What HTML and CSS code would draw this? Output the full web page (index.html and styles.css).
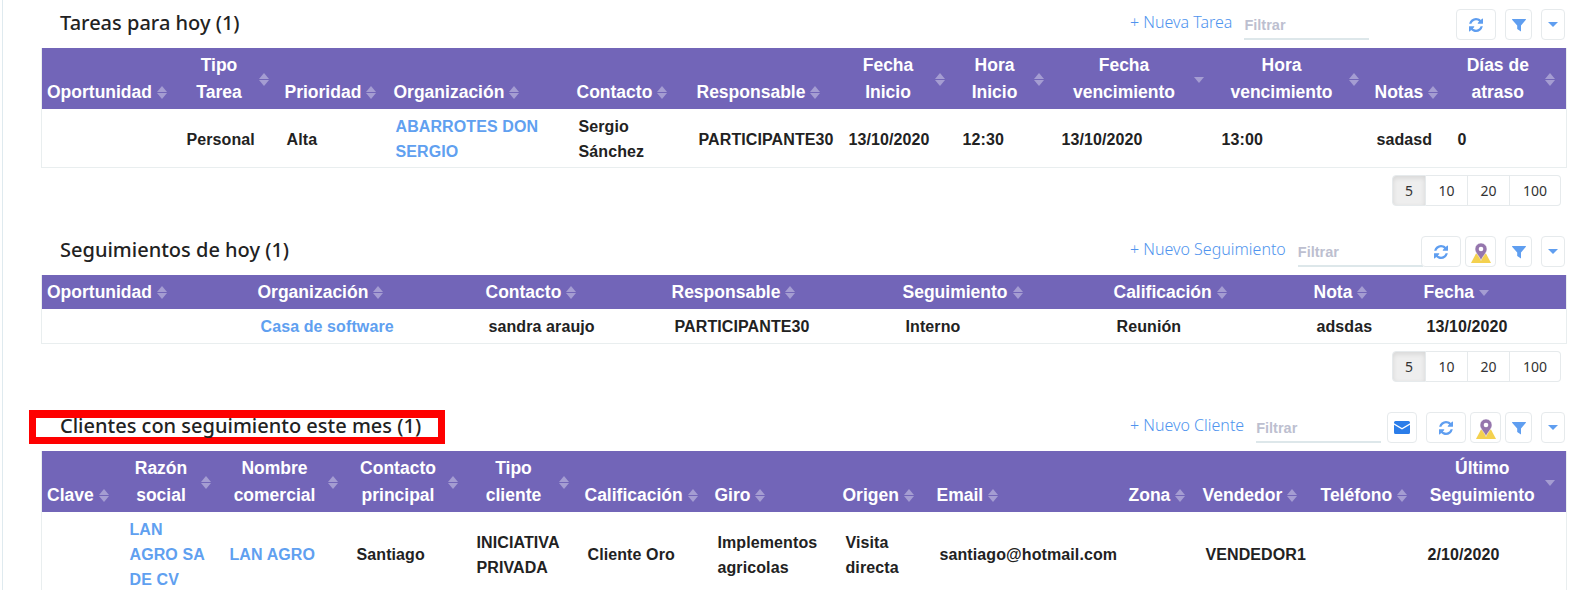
FILE: index.html
```html
<!DOCTYPE html>
<html lang="es">
<head>
<meta charset="utf-8">
<title>Panel</title>
<link rel="stylesheet" href="styles.css">
</head>
<body>
<svg class="defs" width="0" height="0" aria-hidden="true">
  <symbol id="i-refresh" viewBox="0 0 1536 1536"><path d="M1511 928q0 5-1 7-64 268-268 434.500t-478 166.500q-146 0-282.500-55t-243.500-157l-129 129q-19 19-45 19t-45-19-19-45v-448q0-26 19-45t45-19h448q26 0 45 19t19 45-19 45l-137 137q71 66 161 102t187 36q134 0 250-65t186-179q11-17 53-117 8-23 30-23h192q13 0 22.500 9.500t9.500 22.500zm25-800v448q0 26-19 45t-45 19h-448q-26 0-45-19t-19-45 19-45l138-138q-148-137-349-137-134 0-250 65t-186 179q-11 17-53 117-8 23-30 23h-199q-13 0-22.500-9.500t-9.500-22.500v-7q65-268 270-434.500t480-166.500q146 0 284 55.500t245 156.500l130-129q19-19 45-19t45 19 19 45z"/></symbol>
  <symbol id="i-filter" viewBox="0 0 14 14"><path d="M0.500 1h13a.5.5 0 0 1 .4.8L9 7.500V13.500L5.200 11V7.500L.1 1.800A.5.5 0 0 1 .5 1z"/></symbol>
  <symbol id="i-map" viewBox="0 -3 20 23"><path d="M5 10.500h10l5 9.500H0z" fill="#f4d14f"/><path d="M10 0a6 6 0 0 0-6 6c0 3.800 4.400 7 6 11.500C11.600 13 16 9.800 16 6a6 6 0 0 0-6-6z" fill="#9576ad" stroke="#fff" stroke-width=".5"/><circle cx="10" cy="6" r="2.300" fill="#fff"/></symbol>
  <symbol id="i-mail" viewBox="0 0 16 13"><path d="M1.500 0h13A1.500 1.500 0 0 1 16 1.500v.7L8 7 0 2.200v-.7A1.500 1.500 0 0 1 1.500 0z"/><path d="M0 3.800 8 8.600l8-4.800v7.700a1.500 1.500 0 0 1-1.500 1.500h-13A1.500 1.500 0 0 1 0 11.500z"/></symbol>
</svg>
<main class="page">

  <section class="block">
    <div class="toolbar">
      <h2 class="title">Tareas para hoy (1)</h2>
      <a class="add" href="#">+ Nueva Tarea</a>
      <input class="filter" placeholder="Filtrar">
      <div class="tools">
        <button class="btn b-refresh"><svg class="ico"><use href="#i-refresh"/></svg></button>
        <button class="btn b-funnel"><svg class="ico"><use href="#i-filter"/></svg></button>
        <button class="btn b-caret"><span class="caret"></span></button>
      </div>
    </div>
    <table class="grid t1">
      <colgroup><col class="c1"><col class="c2"><col class="c3"><col class="c4"><col class="c5"><col class="c6"><col class="c7"><col class="c8"><col class="c9"><col class="c10"><col class="c11"><col class="c12"></colgroup>
      <thead><tr>
        <th><div class="h"><span class="l">Oportunidad</span><span class="sort"></span></div></th>
        <th><div class="h w"><span class="l">Tipo<br>Tarea</span><span class="sort"></span></div></th>
        <th><div class="h"><span class="l">Prioridad</span><span class="sort"></span></div></th>
        <th><div class="h"><span class="l">Organización</span><span class="sort"></span></div></th>
        <th><div class="h"><span class="l">Contacto</span><span class="sort"></span></div></th>
        <th><div class="h"><span class="l">Responsable</span><span class="sort"></span></div></th>
        <th><div class="h w"><span class="l">Fecha<br>Inicio</span><span class="sort"></span></div></th>
        <th><div class="h w"><span class="l">Hora<br>Inicio</span><span class="sort"></span></div></th>
        <th><div class="h w"><span class="l">Fecha<br>vencimiento</span><span class="sort desc"></span></div></th>
        <th><div class="h w"><span class="l">Hora<br>vencimiento</span><span class="sort"></span></div></th>
        <th><div class="h"><span class="l">Notas</span><span class="sort"></span></div></th>
        <th><div class="h w"><span class="l">Días de<br>atraso</span><span class="sort"></span></div></th>
      </tr></thead>
      <tbody><tr>
        <td></td><td>Personal</td><td>Alta</td><td><a href="#">ABARROTES DON SERGIO</a></td><td>Sergio<br>Sánchez</td><td>PARTICIPANTE30</td><td>13/10/2020</td><td>12:30</td><td>13/10/2020</td><td>13:00</td><td>sadasd</td><td>0</td>
      </tr></tbody>
    </table>
    <div class="pager"><button class="pg on">5</button><button class="pg">10</button><button class="pg">20</button><button class="pg last">100</button></div>
  </section>

  <section class="block">
    <div class="toolbar">
      <h2 class="title">Seguimientos de hoy (1)</h2>
      <a class="add" href="#">+ Nuevo Seguimiento</a>
      <input class="filter over" placeholder="Filtrar">
      <div class="tools">
        <button class="btn b-refresh"><svg class="ico"><use href="#i-refresh"/></svg></button>
        <button class="btn b-map"><svg class="pin"><use href="#i-map"/></svg></button>
        <button class="btn b-funnel"><svg class="ico"><use href="#i-filter"/></svg></button>
        <button class="btn b-caret"><span class="caret"></span></button>
      </div>
    </div>
    <table class="grid t2">
      <colgroup><col class="c1"><col class="c2"><col class="c3"><col class="c4"><col class="c5"><col class="c6"><col class="c7"><col class="c8"></colgroup>
      <thead><tr>
        <th><div class="h"><span class="l">Oportunidad</span><span class="sort"></span></div></th>
        <th><div class="h"><span class="l">Organización</span><span class="sort"></span></div></th>
        <th><div class="h"><span class="l">Contacto</span><span class="sort"></span></div></th>
        <th><div class="h"><span class="l">Responsable</span><span class="sort"></span></div></th>
        <th><div class="h"><span class="l">Seguimiento</span><span class="sort"></span></div></th>
        <th><div class="h"><span class="l">Calificación</span><span class="sort"></span></div></th>
        <th><div class="h"><span class="l">Nota</span><span class="sort"></span></div></th>
        <th><div class="h"><span class="l">Fecha</span><span class="sort desc"></span></div></th>
      </tr></thead>
      <tbody><tr>
        <td></td><td><a href="#">Casa de software</a></td><td>sandra araujo</td><td>PARTICIPANTE30</td><td>Interno</td><td>Reunión</td><td>adsdas</td><td>13/10/2020</td>
      </tr></tbody>
    </table>
    <div class="pager"><button class="pg on">5</button><button class="pg">10</button><button class="pg">20</button><button class="pg last">100</button></div>
  </section>

  <section class="block">
    <div class="toolbar">
      <div class="mark"></div>
      <h2 class="title">Clientes con seguimiento este mes (1)</h2>
      <a class="add" href="#">+ Nuevo Cliente</a>
      <input class="filter" placeholder="Filtrar">
      <div class="tools">
        <button class="btn b-mail"><svg class="mail"><use href="#i-mail"/></svg></button>
        <button class="btn b-refresh"><svg class="ico"><use href="#i-refresh"/></svg></button>
        <button class="btn b-map"><svg class="pin"><use href="#i-map"/></svg></button>
        <button class="btn b-funnel tight"><svg class="ico"><use href="#i-filter"/></svg></button>
        <button class="btn b-caret"><span class="caret"></span></button>
      </div>
    </div>
    <table class="grid t3">
      <colgroup><col class="c1"><col class="c2"><col class="c3"><col class="c4"><col class="c5"><col class="c6"><col class="c7"><col class="c8"><col class="c9"><col class="c10"><col class="c11"><col class="c12"><col class="c13"></colgroup>
      <thead><tr>
        <th><div class="h"><span class="l">Clave</span><span class="sort"></span></div></th>
        <th><div class="h w"><span class="l">Razón<br>social</span><span class="sort"></span></div></th>
        <th><div class="h w"><span class="l">Nombre<br>comercial</span><span class="sort"></span></div></th>
        <th><div class="h w"><span class="l">Contacto<br>principal</span><span class="sort"></span></div></th>
        <th><div class="h w"><span class="l">Tipo<br>cliente</span><span class="sort"></span></div></th>
        <th><div class="h"><span class="l">Calificación</span><span class="sort"></span></div></th>
        <th><div class="h"><span class="l">Giro</span><span class="sort"></span></div></th>
        <th><div class="h"><span class="l">Origen</span><span class="sort"></span></div></th>
        <th><div class="h"><span class="l">Email</span><span class="sort"></span></div></th>
        <th><div class="h"><span class="l">Zona</span><span class="sort"></span></div></th>
        <th><div class="h"><span class="l">Vendedor</span><span class="sort"></span></div></th>
        <th><div class="h"><span class="l">Teléfono</span><span class="sort"></span></div></th>
        <th><div class="h w"><span class="l">Último<br>Seguimiento</span><span class="sort desc"></span></div></th>
      </tr></thead>
      <tbody><tr>
        <td></td><td><a href="#">LAN<br>AGRO SA<br>DE CV</a></td><td><a href="#">LAN AGRO</a></td><td>Santiago</td><td>INICIATIVA<br>PRIVADA</td><td>Cliente Oro</td><td>Implementos<br>agricolas</td><td>Visita<br>directa</td><td>santiago@hotmail.com</td><td></td><td>VENDEDOR1</td><td></td><td>2/10/2020</td>
      </tr></tbody>
    </table>
  </section>

</main>
</body>
</html>
```

FILE: styles.css
```css
* { box-sizing: border-box; }
html, body { margin: 0; height: 590px; overflow: hidden; background: #fff; }
.defs { position: absolute; }
.page { margin-left: 2px; height: 590px; border-left: 1px solid #dfeaef; padding: 9px 0 0 38px; width: 1564px; }
.block { width: 1525px; margin-bottom: 30px; }

.toolbar { position: relative; display: flex; align-items: center; height: 39px; padding-bottom: 8px; }
.title { flex: 0 0 1089px; margin: 0; padding-left: 19px; font: 500 20px/31px "Noto Sans", sans-serif; color: #222; position: relative; top: -2px; }
.add { font: 300 16px/31px "Noto Sans", sans-serif; color: #4f94ee; text-decoration: none; position: relative; top: -2px; white-space: nowrap; }
.filter { flex: none; width: 125px; height: 31px; margin-left: 12px; border: 0; border-bottom: 2px solid #dde7ea; padding: 2px 0 0; outline: 0; background: transparent; font: bold 14.500px "Liberation Sans", sans-serif; }
.filter::placeholder { color: #bdbfd0; opacity: 1; }
.filter.over { margin-right: -2px; }
.tools { margin-left: auto; display: flex; align-items: center; height: 31px; flex: none; position: relative; }
.btn { display: flex; align-items: center; justify-content: center; height: 31px; padding: 0; background: #fff; border: 1px solid #e6eaec; border-radius: 4px; }
.b-refresh { width: 40px; }
.b-map { width: 31px; margin-left: 4px; }
.b-funnel { width: 27px; margin-left: 9px; }
.b-funnel.tight { margin-left: 4px; }
.b-caret { width: 24px; margin-left: 9px; margin-right: 1px; }
.b-mail { width: 30px; margin-right: 9px; }
.ico { width: 14px; height: 14px; fill: #5f9ef0; }
.pin { width: 20px; height: 23px; }
.mail { width: 16px; height: 13px; fill: #2b7de9; }
.caret { display: block; width: 0; height: 0; border: 5px solid transparent; border-top-color: #5f9ef0; border-bottom-width: 0; }
.mark { position: absolute; left: -12px; top: -2px; width: 416px; height: 34px; border: 7px solid #fe0000; border-top-width: 8px; }

.grid { table-layout: fixed; width: 1525px; border-collapse: collapse; font-family: "Liberation Sans", Arial, sans-serif; border-left: 1px solid #e9eeef; border-right: 1px solid #e9eeef; }
.grid th { background: #7265b8; color: #fff; padding: 4px 0 3px 5px; font-size: 17.500px; font-weight: 700; line-height: 27px; text-align: left; vertical-align: bottom; }
.h { display: flex; align-items: center; padding-right: 5px; white-space: nowrap; }
.h .sort { margin-left: 5px; }
.h.w { padding-right: 10px; }
.h.w .l { flex: 1; text-align: center; }
.sort { flex: none; display: block; width: 11px; height: 13px; position: relative; }
.sort::before, .sort::after { content: ""; position: absolute; left: 0; border: 5.500px solid transparent; }
.sort::before { top: 0; border-top-width: 0; border-bottom: 6px solid #a59dd2; }
.sort::after { bottom: 0; border-bottom-width: 0; border-top: 6px solid #a59dd2; }
.sort.desc::before { display: none; }
.sort.desc::after { bottom: 3px; }
.grid td { padding: 5px 0 3px 7px; font-size: 16px; font-weight: 700; letter-spacing: .1px; line-height: 25px; color: #222; border-bottom: 1px solid #e9eeef; }
.grid.t2 td { padding: 5px 0 4px 8px; }
.grid.t3 td { padding-left: 8px; }
.grid a { color: #60a0f0; text-decoration: none; }

.t1 .c1 { width: 138px; } .t1 .c2 { width: 100px; } .t1 .c3 { width: 109px; } .t1 .c4 { width: 183px; }
.t1 .c5 { width: 120px; } .t1 .c6 { width: 150px; } .t1 .c7 { width: 114px; } .t1 .c8 { width: 99px; }
.t1 .c9 { width: 160px; } .t1 .c10 { width: 155px; } .t1 .c11 { width: 81px; } .t1 .c12 { width: 116px; }

.t2 .c1 { width: 211px; } .t2 .c2 { width: 228px; } .t2 .c3 { width: 186px; } .t2 .c4 { width: 231px; }
.t2 .c5 { width: 211px; } .t2 .c6 { width: 200px; } .t2 .c7 { width: 110px; } .t2 .c8 { width: 148px; }

.t3 .c1 { width: 80px; } .t3 .c2 { width: 100px; } .t3 .c3 { width: 127px; } .t3 .c4 { width: 120px; }
.t3 .c5 { width: 111px; } .t3 .c6 { width: 130px; } .t3 .c7 { width: 128px; } .t3 .c8 { width: 94px; }
.t3 .c9 { width: 192px; } .t3 .c10 { width: 74px; } .t3 .c11 { width: 118px; } .t3 .c12 { width: 104px; } .t3 .c13 { width: 147px; }

.pager { display: flex; justify-content: flex-end; margin-top: 7px; padding-right: 5px; }
.pg { height: 31px; width: 42px; padding: 0; background: #fff; border: 1px solid #e6eaec; border-left: 0; font: 14px "Noto Sans", sans-serif; color: #333; }
.pg.on { width: 34px; border-left: 1px solid #e6eaec; border-radius: 4px 0 0 4px; background: #eee; box-shadow: inset 0 2px 5px rgba(0,0,0,.1); }
.pg.last { width: 51px; border-radius: 0 4px 4px 0; }
```
